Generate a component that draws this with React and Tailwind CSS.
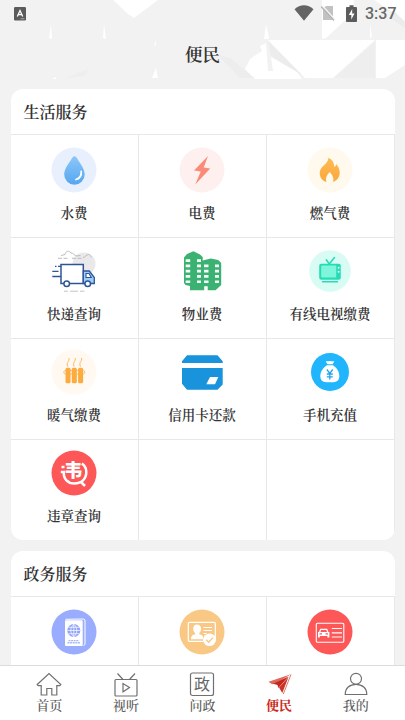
import React from "react";

const WaterIcon = () => (
  <svg viewBox="0 0 48 48" className="h-12 w-12">
    <defs>
      <linearGradient id="water" x1="0" y1="0" x2="0" y2="1">
        <stop offset="0" stopColor="#8cc6f8" />
        <stop offset="1" stopColor="#55a7f0" />
      </linearGradient>
    </defs>
    <circle cx="24" cy="24" r="22.5" fill="#e9f0fd" />
    <path
      d="M24.5 10.300c-1.200 0-2 1.200-3 2.800-3.200 5-7.300 10-7.300 15.400a10.200 10.200 0 0 0 20.500 0c0-5.400-4.100-10.400-7.200-15.400-1-1.600-1.800-2.800-3-2.800z"
      fill="url(#water)"
    />
    <path d="M31.200 25.500c.4 4-1.600 7-5.200 8" stroke="#fff" strokeWidth="1.800" strokeLinecap="round" fill="none" />
  </svg>
);

const PowerIcon = () => (
  <svg viewBox="0 0 48 48" className="h-12 w-12">
    <circle cx="24" cy="24" r="22.5" fill="#fff0f0" />
    <path d="M30 10L16 24.5l6.700 1-5.400 13L32.200 22.500l-6.500-.9z" fill="#fb8b78" />
  </svg>
);

const GasIcon = () => (
  <svg viewBox="0 0 48 48" className="h-12 w-12">
    <defs>
      <linearGradient id="gas" x1="0" y1="0" x2="0" y2="1">
        <stop offset="0" stopColor="#fdbb55" />
        <stop offset="1" stopColor="#fba83a" />
      </linearGradient>
    </defs>
    <circle cx="24" cy="24" r="22.5" fill="#fff9ee" />
    <path
      d="M22.500 11.700c5 2.500 5.200 5.800 6 9.300 1-.6 1.500-1.500 1.500-3 2.200 2.200 3.700 5 3.700 8.500 0 4.500-2.500 8-6.700 9.500 1.300-4-.5-6.800-3.300-10-2.800 3.200-4.700 6-3.200 10-4.200-1.200-6.800-4.700-6.800-9 0-7 8-8 8.800-15.300z"
      fill="url(#gas)"
    />
  </svg>
);

const TruckIcon = () => (
  <svg viewBox="0 0 48 48" className="h-12 w-12" fill="none">
    <circle cx="34" cy="17" r="11.500" fill="#e9e9ec" />
    <path
      d="M11 8.500l4-1c1-4 4-4 6-1.500 2 .5 3.500 1 4.500 3l5-.5M33 10.500c2 0 3.500-3 5.500-3 1.500 0 2 1.500 3 3"
      stroke="#bcbcc0"
      strokeWidth="1"
    />
    <path d="M8 11.300h10M22 11.300h11" stroke="#bcbcc0" strokeWidth="1" strokeDasharray="4 1.500" />
    <path d="M11 17.500h22.300v19H11z" fill="#fff" stroke="#2e5596" strokeWidth="1.500" />
    <path d="M33.300 24h6l5 6.500v6h-11z" fill="#9fcdfb" stroke="#2e5596" strokeWidth="1.300" />
    <path d="M36 26.500h3l2.300 4H36z" fill="#fff" stroke="#2e5596" strokeWidth="1.100" />
    <path d="M5 19.300h1.500M8 19.300h3M2.300 24.300H8.500M2.300 29.500H11" stroke="#2e5596" strokeWidth="1.300" />
    <circle cx="16.700" cy="36.700" r="2.800" fill="#fff" stroke="#2e5596" strokeWidth="1.500" />
    <circle cx="37.700" cy="36.700" r="2.800" fill="#fff" stroke="#2e5596" strokeWidth="1.500" />
    <path d="M14 44.200h4M20 44.200h8M30 44.200h4.500" stroke="#c4c4c8" strokeWidth="1" />
  </svg>
);

const BuildingIcon = () => (
  <svg viewBox="0 0 48 48" className="h-12 w-12">
    <path
      d="M6 10.500l3-3.500 6.500-2.700L22 7.500l2.700 2.500v3.500l8-2 7.500 1.500 3 3v22L37.500 43.300H29.700v-4h-3.500v4H12V39L7.500 38 6 36z"
      fill="#3bb272"
    />
    <path
      d="M7.700 12.300h4.500v2.700H7.700zM7.700 17.500h4.500v2.700H7.700zM7.700 22.800h4.500v2.700H7.700zM7.700 28.100h4.500v2.700H7.700zM7.700 33.400h4.500v2.700H7.700zM19 12.300h4v2.700h-4zM19 17.500h4v2.700h-4zM19 22.800h4v2.700h-4zM19 28.100h4v2.700h-4zM19 33.400h4v2.700h-4zM26 17.500h4.500v2.700H26zM26 22.800h4.500v2.700H26zM26 28.100h4.500v2.700H26zM26 33.400h4.500v2.700H26zM37 17.500h4v2.700h-4zM37 22.800h4v2.700h-4zM37 28.100h4v2.700h-4zM37 33.400h4v2.700h-4z"
      fill="#f4fff9"
    />
  </svg>
);

const TvIcon = () => (
  <svg viewBox="0 0 48 48" className="h-12 w-12">
    <circle cx="24" cy="24" r="20.800" fill="#d8fcf4" />
    <path d="M20.300 12.800l3 4.200L28.500 10.500M16.500 34.800h15" stroke="#27dcb4" strokeWidth="1.600" fill="none" strokeLinecap="round" />
    <rect x="13.200" y="16.700" width="21.600" height="16" rx="2" fill="#27dcb4" />
    <rect x="15.200" y="18.500" width="15" height="12" rx="1" fill="#7ff5dc" />
    <circle cx="32.600" cy="20.700" r="1" fill="#e2fff9" />
    <circle cx="32.600" cy="24.700" r="1" fill="#e2fff9" />
  </svg>
);

const HeatIcon = () => (
  <svg viewBox="0 0 48 48" className="h-12 w-12">
    <circle cx="24" cy="24" r="22.5" fill="#fff9f1" />
    <g fill="#fcab3c">
      <rect x="15.500" y="19.700" width="5" height="15.500" rx="1.500" />
      <rect x="21.800" y="19.700" width="5" height="15.500" rx="1.500" />
      <rect x="28.100" y="19.700" width="5" height="15.500" rx="1.500" />
    </g>
    <rect x="13.800" y="22.600" width="21" height="3.400" rx="1.600" fill="none" stroke="#fbb04a" strokeWidth="0.800" />
    <path
      d="M18.800 10c1.500 3-3 4-1 8.500M25.100 10c1.500 3-3 4-1 8.500M31.400 10c1.500 3-3 4-1 8.500"
      fill="none"
      stroke="#fdb95c"
      strokeWidth="1"
    />
  </svg>
);

const CardIcon = () => (
  <svg viewBox="0 0 48 48" className="h-12 w-12">
    <path d="M9 7.300h30.500l5.200 6v1.700H4v-1.700zM4 20h40.700v16.500l-5.200 5.200H9l-5-6z" fill="#1893dc" />
    <path d="M32 29h8.300L37 36.300h-8.700z" fill="#fff" />
  </svg>
);

const MoneyIcon = () => (
  <svg viewBox="0 0 48 48" className="h-12 w-12">
    <circle cx="24" cy="24" r="19" fill="#20b5fc" />
    <path d="M19.700 13.500c1.500-.8 2.500 0 4.100-.4 1.700.4 3-.4 4.500.4L26.500 16.200h-5z" fill="#fff" />
    <path d="M21 17.300h6c3.500 2.200 6.500 6.500 6.300 11 0 4-2.500 5.900-6 5.900h-7c-3.500 0-6-2-6-5.900 0-4.500 3-8.800 6.700-11z" fill="#fff" />
    <path d="M20.900 21.500l2.900 4 2.900-4M20.800 26h6M20.800 28.800h6M23.800 25.500v6" stroke="#20a5ec" strokeWidth="1.300" fill="none" />
  </svg>
);

const ViolationIcon = () => (
  <svg viewBox="0 0 48 48" className="h-12 w-12">
    <circle cx="24" cy="24" r="22.5" fill="#fd5757" />
    <text
      x="23.300"
      y="27.600"
      textAnchor="middle"
      fontSize="18"
      fontWeight="900"
      fill="#fff"
      fontFamily="Noto Sans CJK SC, sans-serif"
    >
      韦
    </text>
    <path
      d="M11.500 18h3M10.800 23h3c-.5 7 4 11.500 10.500 11.500 7.200 0 12-4.500 12-11.500 0-3.700-1.500-6.500-4.500-8.500M31 33l4 4"
      stroke="#fff"
      strokeWidth="2.500"
      fill="none"
    />
  </svg>
);

const PassportIcon = () => (
  <svg viewBox="0 0 48 48" className="h-12 w-12" fill="none">
    <circle cx="24" cy="24" r="22.5" fill="#9aacfd" />
    <path d="M15.500 11.300l18-.3 1.500 1v24.500l-1.500 1.200" stroke="#fff" strokeWidth="1" />
    <rect x="15" y="12.300" width="17.700" height="25.700" rx="0.800" fill="#fff" />
    <circle cx="23.800" cy="22.500" r="6.500" fill="#8fa3f8" />
    <path
      d="M17.500 22.500h12.600M18.500 19.300h10.600M18.500 25.700h10.600M23.800 16.200v12.600M23.800 16.200c-4 4-4 8.600 0 12.600M23.800 16.200c4 4 4 8.600 0 12.600"
      stroke="#fff"
      strokeWidth="0.700"
    />
    <path d="M17.500 34.700h12.600M18.500 32.600h10.600" stroke="#a9b8fd" strokeWidth="1.400" strokeDasharray="2 .6" />
  </svg>
);

const IdCardIcon = () => (
  <svg viewBox="0 0 48 48" className="h-12 w-12" fill="none">
    <circle cx="24" cy="24" r="22.5" fill="#fac885" />
    <rect x="10.300" y="14.300" width="27" height="19" rx="1" stroke="#fff" strokeWidth="1.200" />
    <path
      d="M19 16.500c2.500 0 4 1.700 4 4.300 0 2-.7 3.300-1.700 4.300v1.200c2 .5 4.200 1.300 4.200 5H13c0-3.700 2-4.500 4-5V25c-1-1-1.800-2.300-1.800-4.200 0-2.600 1.500-4.300 3.800-4.300z"
      fill="#fff"
    />
    <path d="M25.500 19.500H34M25.500 22.500H34M25.500 25.500h3" stroke="#fff" strokeWidth="1" />
    <circle cx="31.500" cy="31.800" r="6.300" fill="#fff" />
    <path d="M28.200 31.800l2.500 2.500 4.300-4.700" stroke="#fac885" strokeWidth="1.400" />
  </svg>
);

const DriverIcon = () => (
  <svg viewBox="0 0 48 48" className="h-12 w-12" fill="none">
    <circle cx="24" cy="24" r="22.5" fill="#fd5757" />
    <rect x="10.300" y="15.200" width="27.500" height="19" rx="1" stroke="#fff" strokeWidth="1.100" />
    <path
      d="M14.200 20.700h7l1.200 3.300h1v5.500h-2V28h-7.600v1.500H12V24h1zm.9 1.200l-.7 2.100h6.600l-.7-2.100zM13.500 25.200v1.300H16v-1.300zM19.500 25.200v1.300H22v-1.300z"
      fill="#fff"
      fillRule="evenodd"
    />
    <path d="M25.800 20.500H36M25.800 24.800H36M25.800 29H36" stroke="#fff" strokeWidth="1.200" />
  </svg>
);

const lifeServices = [
  { name: "水费", icon: <WaterIcon /> },
  { name: "电费", icon: <PowerIcon /> },
  { name: "燃气费", icon: <GasIcon /> },
  { name: "快递查询", icon: <TruckIcon /> },
  { name: "物业费", icon: <BuildingIcon /> },
  { name: "有线电视缴费", icon: <TvIcon /> },
  { name: "暖气缴费", icon: <HeatIcon /> },
  { name: "信用卡还款", icon: <CardIcon /> },
  { name: "手机充值", icon: <MoneyIcon /> },
  { name: "违章查询", icon: <ViolationIcon /> },
  {},
  {},
];

const govServices = [{ icon: <PassportIcon /> }, { icon: <IdCardIcon /> }, { icon: <DriverIcon /> }];

const tabs = [
  {
    name: "首页",
    icon: <path d="M1.200 12.500L13 1.500l11.800 11-1 1.200h-3V23h-5v-6.500h-5V23h-5.600v-9.300H2.200z" />,
  },
  {
    name: "视听",
    icon: (
      <>
        <rect x="2" y="7.500" width="22" height="16.500" rx="1" />
        <path d="M4.500 1.500l5.500 6M22 1.500l-5.500 6M10 11.500v8.300l6.500-4.200z" />
      </>
    ),
  },
  {
    name: "问政",
    icon: (
      <>
        <rect x="1.500" y="1" width="23" height="22.500" rx="2" />
        <text
          x="13"
          y="18.300"
          textAnchor="middle"
          fontSize="16"
          fill="#666"
          stroke="none"
          fontFamily="Noto Sans CJK SC, sans-serif"
        >
          政
        </text>
      </>
    ),
  },
  {
    name: "便民",
    active: true,
    icon: (
      <>
        <path d="M25 2.200L2.500 9.800l3.500 2.400 3-.4z" fill="#e2685f" stroke="none" />
        <path d="M22.500 4.500L7 11.800l4.500 1.200.8 3z" fill="#c5271c" stroke="none" />
        <path d="M22.500 5L13 15.500l3.300 5.500z" fill="#cf3328" stroke="none" />
        <path d="M25 2.500L17.300 22" stroke="#e2685f" strokeWidth="0.900" />
      </>
    ),
  },
  {
    name: "我的",
    icon: (
      <>
        <circle cx="13" cy="6.800" r="5.500" />
        <path d="M2.200 22.500c0-6.500 4.500-10.200 10.800-10.200s10.800 3.700 10.800 10.200z" />
      </>
    ),
  },
];

const Header = () => {
  return (
    <div className="relative h-[89px] shrink-0">
      {/* paper texture */}
      <svg viewBox="0 0 405 89" className="absolute inset-0 h-[89px] w-[405px]">
        <path d="M113 0h45l-24 18-6-4z" fill="#fff" />
        <path d="M322 0h32l-2 14-26 24-4 1zM374 0h31v21l-14-10z" fill="#fff" />
        <path d="M268 40h107l-42 38h-28z" fill="#fff" />
        <path d="M260 46l6-3 2 28h5l-2-14 26 15 5 7h-47l-10-10 5-10 12-8z" fill="#fff" />
        <path d="M376 40h29v25l-20 13h-9z" fill="#fff" />
        <path d="M218 55l12 3 24 20h-14z" fill="#ededed" />
        <path d="M268 41l34 34-31-19z" fill="#ececec" />
        <path d="M375 42v36h-41z" fill="#eee" />
        <path d="M395 12l10 10v6l-16-11z" fill="#ececec" />
        <path d="M66 78l24-10-6 8z" fill="#eee" />
        <path d="M49 38l2-14 1 15zM103 38l1-14 2 15zM154 46l2-6v5zM152 78l4-10 2 10zM52 79l4-2v2zM264 39l2-15 3 13v2zM370 38v-14l2 13z" fill="#fff" />
      </svg>
      {/* status bar */}
      <div className="relative flex h-7 items-center pl-[14px] pr-2">
        <svg viewBox="0 0 12 14" className="h-[14px] w-3">
          <rect width="12" height="13.500" rx="1.200" fill="#5a5a5a" />
          <path d="M3.300 9.500L6 3.500l2.700 6M4.200 7.600h3.600" stroke="#fff" strokeWidth="1.300" fill="none" />
          <path d="M6.500 11.800h4" stroke="#ccc" strokeWidth="0.700" />
        </svg>
        <div className="ml-auto flex items-center">
          <svg viewBox="0 0 20 16" className="h-4 w-5 -translate-y-px">
            <path d="M0.500 4.200C6-1 14-1 19.500 4.200L10 15.700z" fill="#646464" />
          </svg>
          <svg viewBox="0 0 14 16" className="ml-[7px] h-4 w-[14px] -translate-y-px">
            <path d="M5 1h7v14H2V4z" fill="#c2c2c2" />
            <path d="M1 0.500L14 14.500" stroke="#f4f4f4" strokeWidth="1.500" />
            <path d="M0 1.500L13 15.500" stroke="#b4b4b4" strokeWidth="1.200" />
          </svg>
          <svg viewBox="0 0 11 17" className="ml-[11px] h-[17px] w-[11px] -translate-y-px">
            <path d="M1 2h2.500V.3h4V2H10c.5 0 1 .5 1 1v13c0 .6-.4 1-1 1H1c-.6 0-1-.4-1-1V3c0-.5.4-1 1-1z" fill="#5c5c5c" />
            <path d="M6.200 4L2.800 10h2.500v4.500L8.500 8.500H6.200z" fill="#fff" />
          </svg>
          <span className="ml-2 w-[32px] whitespace-nowrap font-['Roboto',sans-serif] text-[16px] leading-4 font-medium text-[#686868]">
            3:37
          </span>
        </div>
      </div>
      <h1 className="relative pt-[13px] text-center text-[17.5px] leading-[26px] font-semibold text-[#333]">便民</h1>
    </div>
  );
};

const Service = ({ item, first }) => {
  return (
    <div
      className={`flex flex-col items-center border-r border-b border-[#e8e8e8] ${
        first ? "h-[103px] pt-[11px]" : "h-[101px] pt-[9px]"
      }`}
    >
      {item.icon}
      <p className="mt-2 text-[13.5px] leading-5 font-semibold whitespace-nowrap text-[#333]">{item.name}</p>
    </div>
  );
};

const Section = ({ title, items }) => {
  return (
    <div className="mx-[10.5px] overflow-hidden rounded-xl bg-white">
      <h2 className="h-[46px] border-b border-[#e8e8e8] pl-[13px] text-[16px] leading-[46px] font-semibold text-[#333]">
        {title}
      </h2>
      <div className="-mb-px grid grid-cols-3">
        {items.map((item, i) => (
          <Service key={i} item={item} first={i < 3} />
        ))}
      </div>
    </div>
  );
};

const App = () => {
  return (
    <div className="flex h-[720px] w-[405px] flex-col overflow-hidden bg-[#f2f2f2] font-['Noto_Serif_CJK_SC','Noto_Serif_SC','Noto_Sans_CJK_SC',serif]">
      <Header />
      <div className="flex min-h-0 flex-1 flex-col gap-[11px] overflow-hidden *:shrink-0">
        <Section title="生活服务" items={lifeServices} />
        <Section title="政务服务" items={govServices} />
      </div>
      {/* bottom tabs */}
      <div className="flex h-[55px] shrink-0 border-t border-[#dcdcdc] bg-white px-[11px] pt-[6px]">
        {tabs.map((tab) => (
          <div key={tab.name} className="flex flex-1 flex-col items-center">
            <svg viewBox="0 0 26 25" className="h-[25px] w-[26px]" fill="none" stroke="#707070" strokeWidth="1.200">
              {tab.icon}
            </svg>
            <span
              className={`-mt-px text-[13px] leading-[18px] ${
                tab.active ? "font-bold text-[#cc2a20]" : "font-medium text-[#555]"
              }`}
            >
              {tab.name}
            </span>
          </div>
        ))}
      </div>
    </div>
  );
};

export default App;
